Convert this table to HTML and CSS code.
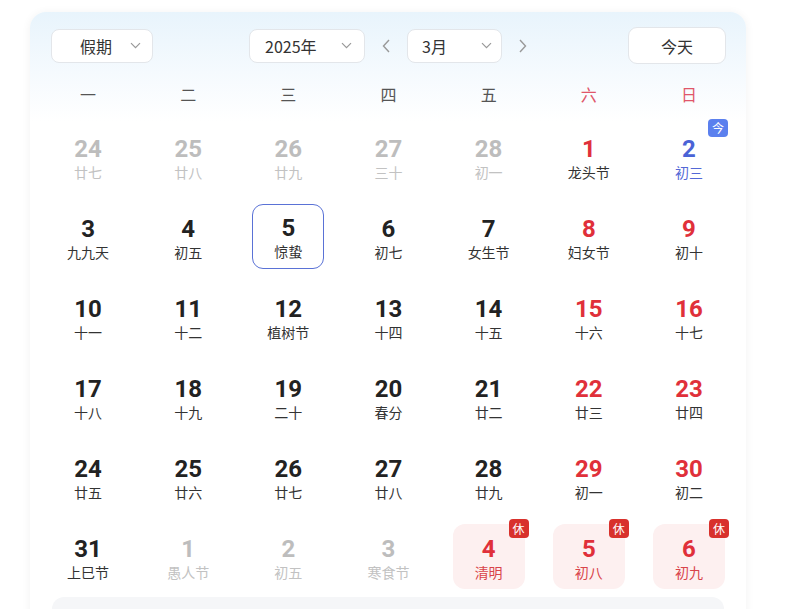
FILE: index.html
```html
<!DOCTYPE html>
<html lang="zh-CN">
<head>
<meta charset="UTF-8">
<title>万年历</title>
<link rel="stylesheet" href="styles.css">
</head>
<body>
<div class="card">
  <!-- 顶部工具栏 -->
  <div class="toolbar">
    <div class="select sel-holiday">
      <span>假期</span>
      <svg class="chev" width="11" height="7" viewBox="0 0 11 7"><path d="M1 1.2l4.5 4.5 4.5-4.5" fill="none" stroke="#999" stroke-width="1.2"/></svg>
    </div>
    <div class="nav">
      <div class="select sel-year">
        <span>2025年</span>
        <svg class="chev" width="11" height="7" viewBox="0 0 11 7"><path d="M1 1.2l4.5 4.5 4.5-4.5" fill="none" stroke="#999" stroke-width="1.2"/></svg>
      </div>
      <span class="arrow"><svg width="8" height="14" viewBox="0 0 8 14"><path d="M7 1L1.5 7 7 13" fill="none" stroke="#999" stroke-width="1.4"/></svg></span>
      <div class="select sel-month">
        <span>3月</span>
        <svg class="chev" width="11" height="7" viewBox="0 0 11 7"><path d="M1 1.2l4.5 4.5 4.5-4.5" fill="none" stroke="#999" stroke-width="1.2"/></svg>
      </div>
      <span class="arrow"><svg width="8" height="14" viewBox="0 0 8 14"><path d="M1 1l5.5 6L1 13" fill="none" stroke="#999" stroke-width="1.4"/></svg></span>
    </div>
    <button class="today-btn">今天</button>
  </div>

  <!-- 星期 -->
  <div class="weekdays">
    <span>一</span><span>二</span><span>三</span><span>四</span><span>五</span>
    <span class="wk-red">六</span><span class="wk-red">日</span>
  </div>

  <!-- 日期 -->
  <div class="days">
    <div class="day other"><b>24</b><i>廿七</i></div>
    <div class="day other"><b>25</b><i>廿八</i></div>
    <div class="day other"><b>26</b><i>廿九</i></div>
    <div class="day other"><b>27</b><i>三十</i></div>
    <div class="day other"><b>28</b><i>初一</i></div>
    <div class="day red"><b>1</b><i>龙头节</i></div>
    <div class="day today"><b>2</b><i>初三</i><em class="tag tag-today">今</em></div>

    <div class="day"><b>3</b><i>九九天</i></div>
    <div class="day"><b>4</b><i>初五</i></div>
    <div class="day selected"><b>5</b><i>惊蛰</i></div>
    <div class="day"><b>6</b><i>初七</i></div>
    <div class="day"><b>7</b><i>女生节</i></div>
    <div class="day red"><b>8</b><i>妇女节</i></div>
    <div class="day red"><b>9</b><i>初十</i></div>

    <div class="day"><b>10</b><i>十一</i></div>
    <div class="day"><b>11</b><i>十二</i></div>
    <div class="day"><b>12</b><i>植树节</i></div>
    <div class="day"><b>13</b><i>十四</i></div>
    <div class="day"><b>14</b><i>十五</i></div>
    <div class="day red"><b>15</b><i>十六</i></div>
    <div class="day red"><b>16</b><i>十七</i></div>

    <div class="day"><b>17</b><i>十八</i></div>
    <div class="day"><b>18</b><i>十九</i></div>
    <div class="day"><b>19</b><i>二十</i></div>
    <div class="day"><b>20</b><i>春分</i></div>
    <div class="day"><b>21</b><i>廿二</i></div>
    <div class="day red"><b>22</b><i>廿三</i></div>
    <div class="day red"><b>23</b><i>廿四</i></div>

    <div class="day"><b>24</b><i>廿五</i></div>
    <div class="day"><b>25</b><i>廿六</i></div>
    <div class="day"><b>26</b><i>廿七</i></div>
    <div class="day"><b>27</b><i>廿八</i></div>
    <div class="day"><b>28</b><i>廿九</i></div>
    <div class="day red"><b>29</b><i>初一</i></div>
    <div class="day red"><b>30</b><i>初二</i></div>

    <div class="day"><b>31</b><i>上巳节</i></div>
    <div class="day other"><b>1</b><i>愚人节</i></div>
    <div class="day other"><b>2</b><i>初五</i></div>
    <div class="day other"><b>3</b><i>寒食节</i></div>
    <div class="day holiday"><b>4</b><i>清明</i><em class="tag tag-rest">休</em></div>
    <div class="day holiday"><b>5</b><i>初八</i><em class="tag tag-rest">休</em></div>
    <div class="day holiday"><b>6</b><i>初九</i><em class="tag tag-rest">休</em></div>
  </div>

  <div class="footer-bar"></div>
</div>
</body>
</html>
```

FILE: styles.css
```css
body{margin:0;background:#fff;font-family:"Noto Sans CJK SC","Noto Sans",sans-serif;color:#333;}
.card{
  margin:12px 0 0 30px;width:716px;height:640px;box-sizing:border-box;
  border-radius:16px;
  background:linear-gradient(180deg,#e8f4fc 0,#f5fafe 60px,#fff 110px);
  box-shadow:0 1px 10px rgba(0,0,0,.06);
  padding:15px 7px 0 8px;
}

/* 工具栏 */
.toolbar{
  display:grid;grid-template-columns:1fr auto 1fr;align-items:center;
  padding:0 13px;height:37px;
}
.select{
  display:flex;align-items:center;justify-content:space-between;box-sizing:border-box;
  height:34px;border:1px solid #e3e6ea;border-radius:8px;background:#fff;
  font-size:16px;color:#333;
}
.select .chev{flex:none;}
.sel-holiday{width:102px;padding:0 11px 0 28px;justify-self:start;}
.sel-year{width:116px;padding:0 12px 0 15px;}
.sel-month{width:95px;padding:0 9px 0 14px;}
.nav{display:flex;align-items:center;gap:12px;margin-left:4px;}
.arrow{width:18px;display:flex;justify-content:center;}
.today-btn{
  justify-self:end;width:98px;height:37px;border:1px solid #e3e6ea;border-radius:9px;
  background:#fff;font-family:inherit;font-size:16px;color:#333;
}

/* 星期 */
.weekdays{
  display:grid;grid-template-columns:repeat(7,1fr);height:44px;align-items:center;
  margin-top:8px;font-size:16px;color:#555;text-align:center;
}
.wk-red{color:#e0566a;}

/* 日期 */
.days{display:grid;grid-template-columns:repeat(7,1fr);grid-auto-rows:80px;align-items:center;justify-items:center;}
.day{
  position:relative;width:72px;height:65px;box-sizing:border-box;border-radius:12px;
  display:flex;flex-direction:column;align-items:center;padding-top:13px;
}
.day b{
  font-family:Roboto,"Liberation Sans",sans-serif;font-weight:700;font-size:24px;
  line-height:24px;color:#222;
}
.day i{font-style:normal;font-size:14px;line-height:18px;color:#333;margin-top:2px;}
.day.other b{color:#bdbdbd;}
.day.other i{color:#c2c2c2;}
.day.red b{color:#e0303a;}
.day.today b{color:#4a63d6;}
.day.today i{color:#5468d6;}
.day.selected{border:1.5px solid #5a72d6;border-radius:11px;padding-top:11.5px;}
.day.holiday{background:#fdf0f0;}
.day.holiday b{color:#e0303a;}
.day.holiday i{color:#d9434a;}

.tag{
  position:absolute;top:-5px;right:-4px;width:20px;height:19px;border-radius:4px;
  font-style:normal;font-size:12px;line-height:19px;text-align:center;color:#fff;
}
.tag-rest{background:#d8312c;}
.tag-today{background:#5b80ee;right:-3px;height:18px;line-height:18px;}

.footer-bar{margin:1px 15px 0 14px;height:40px;border-radius:12px;background:#f5f6f8;}
```
